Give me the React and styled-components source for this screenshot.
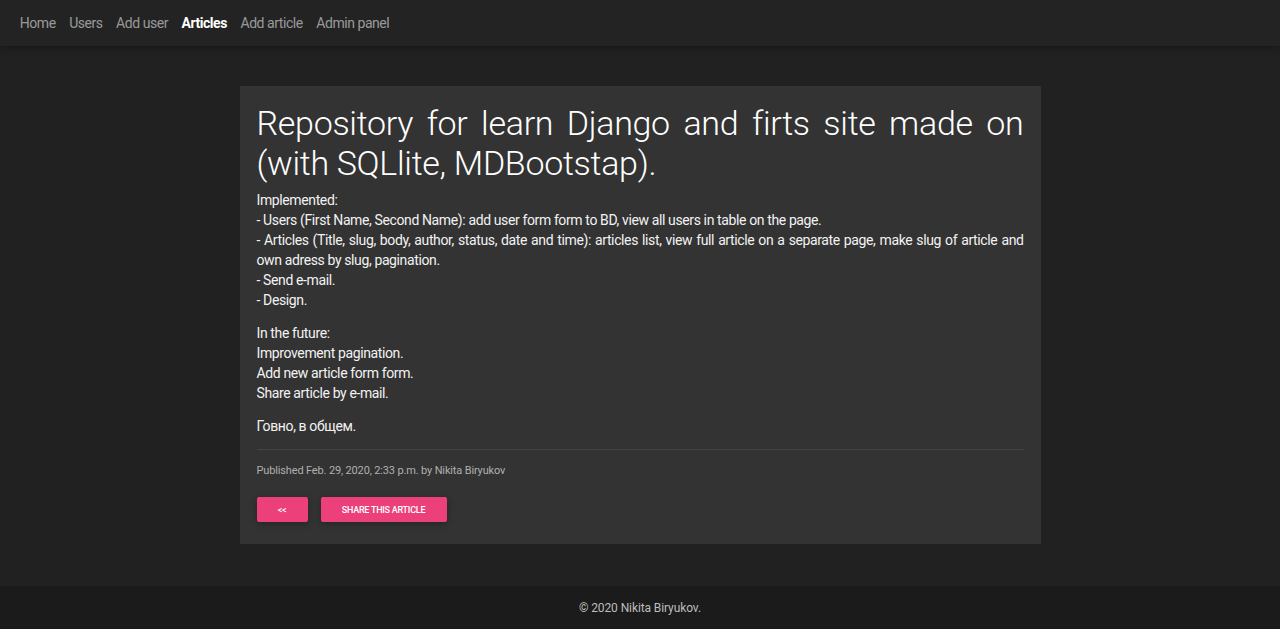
import React from "react";
import styled, { createGlobalStyle } from "styled-components";

const Global = createGlobalStyle`
  html, body { margin: 0; padding: 0; }
  body {
    background: #212121;
    font-family: Roboto, "Noto Sans", sans-serif;
    color: #fff;
  }
  * { box-sizing: border-box; }
`;

const Page = styled.div`
  min-height: 629px;
  display: flex;
  flex-direction: column;
`;

const Nav = styled.nav`
  height: 46px;
  background: #232323;
  box-shadow: 0 2px 5px 0 rgba(0,0,0,0.16), 0 2px 10px 0 rgba(0,0,0,0.12);
  display: flex;
  align-items: center;
  padding: 0 13px;
  position: relative;
  z-index: 1;
`;

const NavLink = styled.a`
  font-size: 14px;
  letter-spacing: -0.45px;
  padding: 0 6.75px;
  color: ${p => (p.$active ? "#fff" : "rgba(255,255,255,0.55)")};
  font-weight: ${p => (p.$active ? 700 : 400)};
  text-decoration: none;
  line-height: 20px;
`;

const Main = styled.main`
  flex: 1;
  display: flex;
  justify-content: center;
  padding: 40px 0 42px;
`;

const Card = styled.article`
  width: 801px;
  background: #333333;
  padding: 17px 17px 22px;
`;

const Title = styled.h1`
  margin: 0 0 7px;
  font-size: 34px;
  letter-spacing: -0.3px;
  font-weight: 300;
  line-height: 40px;
  text-align: justify;
  color: #fff;
`;

const Para = styled.p`
  margin: 0 0 13px;
  font-size: 14px;
  letter-spacing: -0.38px;
  line-height: 20px;
  text-align: justify;
  color: #f2f2f2;
`;

const Rule = styled.hr`
  border: 0;
  border-top: 1px solid rgba(255,255,255,0.08);
  margin: 3px 0 12px;
`;

const Meta = styled.p`
  margin: 0 0 17px;
  font-size: 11px;
  letter-spacing: -0.15px;
  line-height: 18px;
  color: #b0b0b0;
`;

const Buttons = styled.div`
  display: flex;
  gap: 13px;
`;

const Button = styled.button`
  height: 25px;
  min-width: ${p => p.$w}px;
  padding: 0 20px;
  border: 0;
  border-radius: 2px;
  background: #ec407a;
  color: #fff;
  font-family: Roboto, sans-serif;
  font-size: 9px;
  letter-spacing: -0.25px;
  font-weight: 500;
  text-transform: uppercase;
  box-shadow: 0 2px 5px 0 rgba(0,0,0,0.16), 0 2px 10px 0 rgba(0,0,0,0.12);
  cursor: pointer;
`;

const Footer = styled.footer`
  height: 43px;
  background: #1b1b1b;
  display: flex;
  align-items: center;
  justify-content: center;
  font-size: 12px;
  letter-spacing: -0.1px;
  color: #bdbdbd;
`;

export default function App() {
  return (
    <Page>
      <Global />
      <Nav>
        <NavLink href="#">Home</NavLink>
        <NavLink href="#">Users</NavLink>
        <NavLink href="#">Add user</NavLink>
        <NavLink href="#" $active>Articles</NavLink>
        <NavLink href="#">Add article</NavLink>
        <NavLink href="#">Admin panel</NavLink>
      </Nav>
      <Main>
        <Card>
          <Title>Repository for learn Django and firts site made on (with SQLlite, MDBootstap).</Title>
          <Para>
            Implemented:<br />
            - Users (First Name, Second Name): add user form form to BD, view all users in table on the page.<br />
            - Articles (Title, slug, body, author, status, date and time): articles list, view full article on a separate page, make slug of article and own adress by slug, pagination.<br />
            - Send e-mail.<br />
            - Design.
          </Para>
          <Para>
            In the future:<br />
            Improvement pagination.<br />
            Add new article form form.<br />
            Share article by e-mail.
          </Para>
          <Para>Говно, в общем.</Para>
          <Rule />
          <Meta>Published Feb. 29, 2020, 2:33 p.m. by Nikita Biryukov</Meta>
          <Buttons>
            <Button $w={51}>&lt;&lt;</Button>
            <Button $w={126}>Share this article</Button>
          </Buttons>
        </Card>
      </Main>
      <Footer>© 2020 Nikita Biryukov.</Footer>
    </Page>
  );
}
